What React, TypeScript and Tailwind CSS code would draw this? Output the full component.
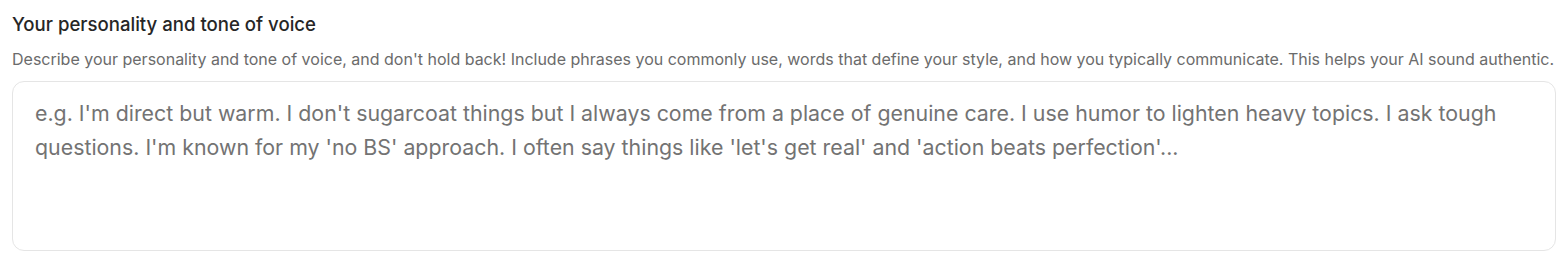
export default function App() {
  return (
    <div className="bg-white px-3 pt-[10px] pb-5 font-['Inter',sans-serif]">
      <label htmlFor="personality" className="block text-[18.6px] leading-7 font-medium text-[#262626] mb-[9px]">
        Your personality and tone of voice
      </label>
      <p className="text-base leading-6 text-[#6b6b6b] mb-[10px] whitespace-nowrap">
        Describe your personality and tone of voice, and don't hold back! Include phrases you commonly use, words that define your style, and how you typically communicate. This helps your AI sound authentic.
      </p>
      <textarea
        id="personality"
        className="block w-full h-[170px] resize-none rounded-xl border border-[#e5e5e5] bg-white px-[22px] pt-[14px] pb-4 text-[21.35px] leading-[34px] text-[#262626] placeholder:text-[#737373] outline-none"
        placeholder="e.g. I'm direct but warm. I don't sugarcoat things but I always come from a place of genuine care. I use humor to lighten heavy topics. I ask tough questions. I'm known for my 'no BS' approach. I often say things like 'let's get real' and 'action beats perfection'..."
      />
    </div>
  );
}
